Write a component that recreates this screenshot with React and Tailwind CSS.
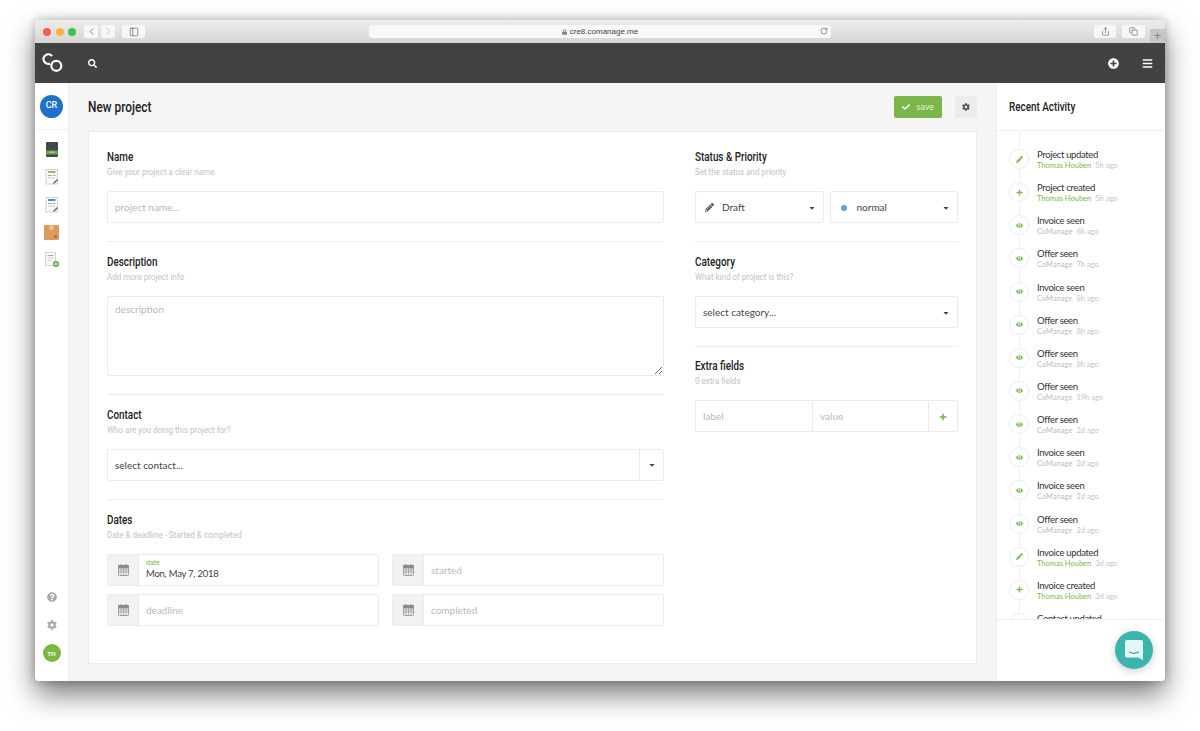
import React from "react";
import { FaSearch, FaPlusCircle, FaBars, FaCog, FaCheck, FaPencilAlt, FaCaretDown, FaPlus, FaEye, FaQuestionCircle, FaLock } from "react-icons/fa";
import { LuChevronLeft, LuChevronRight, LuRotateCw, LuShare, LuCopy, LuPanelLeft } from "react-icons/lu";

const roboto = "font-['Roboto','Liberation_Sans',sans-serif]";
const lato = "font-['Lato','Liberation_Sans',sans-serif]";

function Heading({ children, className = "" }) {
  return <div className={`${roboto} font-medium origin-left scale-x-[0.79] whitespace-nowrap ${className}`}>{children}</div>;
}

function Section({ title, sub, children, last, tight }) {
  const spacing = last ? "" : tight ? "border-b border-[#eeeeee] pb-[18px] mb-[12px]" : "border-b border-[#eeeeee] pb-[18px] mb-[13px]";
  return (
    <div className={spacing}>
      <Heading className="h-[14px] leading-[14px] text-[12.5px] text-[#222]">{title}</Heading>
      <div className={`${roboto} h-[14px] leading-[14px] mt-[1px] mb-[12px] text-[9px] text-[#c2c2c2] origin-left scale-x-[0.89] whitespace-nowrap`}>{sub}</div>
      {children}
    </div>
  );
}

const inputCls = "w-full bg-transparent outline-none text-[10px] text-[#444] placeholder:text-[#b9b9b9] font-['Lato',sans-serif]";

function TextField({ placeholder }) {
  return (
    <div className="h-[32px] border border-[#ebebeb] rounded-[2px] px-[7px] pt-[1px] flex items-center bg-white">
      <input className={inputCls} placeholder={placeholder} />
    </div>
  );
}

function Select({ children, className = "" }) {
  return (
    <div className={`h-[32px] border border-[#ebebeb] rounded-[2px] pl-[7px] pr-[7px] pt-[1px] flex items-center justify-between bg-white text-[10px] text-[#444] ${lato} ${className}`}>
      <div className="flex items-center">{children}</div>
      <FaCaretDown className="text-[#444] w-[8px] h-[8px]" />
    </div>
  );
}

function CalendarIcon() {
  return (
    <svg width="11" height="12" viewBox="0 0 11 12" fill="none" stroke="#8c8c8c" strokeWidth="0.8">
      <rect x="0.5" y="1.5" width="10" height="10" rx="0.8" />
      <rect x="0.5" y="1.5" width="10" height="2.5" fill="#8c8c8c" />
      <path d="M3 0 V3 M8 0 V3" strokeWidth="1.2" />
      <path d="M0.5 6 H10.5 M0.5 8 H10.5 M3 4 V11.5 M5.5 4 V11.5 M8 4 V11.5" strokeWidth="0.6" />
    </svg>
  );
}

function DateField({ placeholder, value }) {
  return (
    <div className="h-[32px] flex border border-[#ebebeb] rounded-[2px] bg-white">
      <div className="w-[31px] bg-[#f2f2f2] flex items-center justify-center border-r border-[#ebebeb]">
        <CalendarIcon />
      </div>
      <div className="flex-1 pl-[7px] flex flex-col justify-center">
        {value ? (
          <>
            <div className={`${roboto} text-[7px] leading-[8px] text-[#7cb84a] -mt-[1px]`}>date</div>
            <div className={`${lato} text-[9.5px] leading-[13px] text-[#444] tracking-[-0.25px]`}>{value}</div>
          </>
        ) : (
          <input className={inputCls} placeholder={placeholder} />
        )}
      </div>
    </div>
  );
}

function Doc({ bar }) {
  return (
    <svg width="14" height="16" viewBox="0 0 14 16" className="block">
      <rect x="1" y="0.5" width="11.5" height="14.5" fill="#fbfbf6" stroke="#c9c9c9" strokeWidth="0.8" />
      <rect x="3" y="2" width="7.5" height="2" fill={bar} />
      <rect x="3" y="6" width="4" height="1" fill="#aaa" />
      <rect x="8" y="6" width="2.5" height="1" fill="#aaa" />
      <rect x="3" y="8.5" width="7" height="1" fill="#ccc" />
      <path d="M8 14 L12 10 L13 11 L9 15 Z" fill="#666" />
    </svg>
  );
}

const SideIcons = [
  <svg key="a" width="12" height="15" viewBox="0 0 12 15" className="block">
    <rect width="12" height="15" rx="1" fill="#3f4a4c" />
    <rect y="8.5" width="12" height="4" fill="#6da13f" />
    <rect x="3" y="9.5" width="6" height="1.5" fill="#a8cf75" />
  </svg>,
  <Doc key="b" bar="#8cc069" />,
  <Doc key="c" bar="#4a90c8" />,
  <svg key="d" width="15" height="15" viewBox="0 0 15 15" className="block">
    <rect width="15" height="15" rx="1" fill="#dc9c5c" />
    <rect x="5.5" width="4" height="5" fill="#eec08e" />
    <rect x="10" y="10" width="3" height="3" fill="#b9753a" />
  </svg>,
  <svg key="e" width="14" height="15" viewBox="0 0 14 15" className="block">
    <rect x="0.5" y="0.5" width="10" height="13" fill="#fbfbf6" stroke="#c9c9c9" strokeWidth="0.8" />
    <rect x="2.5" y="3" width="6" height="1" fill="#aaa" />
    <rect x="2.5" y="5.5" width="6" height="1" fill="#ccc" />
    <rect x="2.5" y="8" width="4" height="1" fill="#ccc" />
    <circle cx="11" cy="12" r="3" fill="#62a84a" />
    <path d="M9.5 12 H12.5 M11 10.5 V13.5" stroke="#fff" strokeWidth="0.9" />
  </svg>,
];

const activity = [
  ["Project updated", "Thomas Houben", "5h ago", "edit"],
  ["Project created", "Thomas Houben", "5h ago", "add"],
  ["Invoice seen", "CoManage", "6h ago", "seen"],
  ["Offer seen", "CoManage", "7h ago", "seen"],
  ["Invoice seen", "CoManage", "8h ago", "seen"],
  ["Offer seen", "CoManage", "8h ago", "seen"],
  ["Offer seen", "CoManage", "8h ago", "seen"],
  ["Offer seen", "CoManage", "19h ago", "seen"],
  ["Offer seen", "CoManage", "2d ago", "seen"],
  ["Invoice seen", "CoManage", "2d ago", "seen"],
  ["Invoice seen", "CoManage", "2d ago", "seen"],
  ["Offer seen", "CoManage", "2d ago", "seen"],
  ["Invoice updated", "Thomas Houben", "3d ago", "edit"],
  ["Invoice created", "Thomas Houben", "3d ago", "add"],
  ["Contact updated", "Thomas Houben", "3d ago", "edit"],
];

function ActivityRow({ title, who, when, kind }) {
  const Icon = kind === "edit" ? FaPencilAlt : kind === "add" ? FaPlus : FaEye;
  return (
    <div className={`relative h-[33.15px] pl-[40px] ${lato}`}>
      <div className="absolute left-[12px] top-[7px] w-[20px] h-[20px] rounded-full bg-white border border-[#eeeeee] flex items-center justify-center">
        <Icon className="w-[7px] h-[7px] text-[#7cb84a]" />
      </div>
      <div className="text-[9.5px] leading-[12px] text-[#333] pt-[7px] h-[19px] box-content -mb-[7px] tracking-[-0.35px]">{title}</div>
      <div className="text-[7.5px] leading-[10px] whitespace-nowrap">
        <span className={who === "CoManage" ? "text-[#bdbdbd]" : "text-[#7cb84a]"}>{who}</span>
        <span className="text-[#c4c4c4] ml-[4px]">{when}</span>
      </div>
    </div>
  );
}

function ToolBtn({ className = "", children }) {
  return <div className={`h-[13px] bg-[#f7f7f7] rounded-[2px] flex items-center justify-center text-[#777] ${className}`}>{children}</div>;
}

export default function App() {
  return (
    <div className="w-[1200px] h-[731px] bg-white pt-[20px] px-[35px] overflow-hidden">
      <div className="relative h-[661px] rounded-[4px] flex flex-col bg-white shadow-[0_14px_28px_rgba(0,0,0,0.5),0_0_10px_rgba(0,0,0,0.25)]">
        <div className="h-[23px] shrink-0 rounded-t-[4px] bg-gradient-to-b from-[#ededed] to-[#d6d6d6] flex items-center pl-[8px] relative">
          <div className="flex gap-[4.5px]">
            <span className="w-[8px] h-[8px] rounded-full bg-[#f0605a]" />
            <span className="w-[8px] h-[8px] rounded-full bg-[#f6b53a]" />
            <span className="w-[8px] h-[8px] rounded-full bg-[#3fc04f]" />
          </div>
          <div className="flex gap-[3px] ml-[8px]">
            <ToolBtn className="w-[14px]"><LuChevronLeft className="w-[11px] h-[11px]" /></ToolBtn>
            <ToolBtn className="w-[14px] text-[#bbb]"><LuChevronRight className="w-[11px] h-[11px]" /></ToolBtn>
          </div>
          <ToolBtn className="w-[23px] ml-[7px]"><LuPanelLeft className="w-[10px] h-[10px]" /></ToolBtn>
          <div className="ml-[224px] w-[462px] h-[13px] bg-[#f8f8f8] rounded-[3px] flex items-center justify-center relative">
            <FaLock className="w-[5px] h-[6px] text-[#888] mr-[3px]" />
            <span className="font-['Liberation_Sans',sans-serif] text-[8px] text-[#444]">cre8.comanage.me</span>
            <LuRotateCw className="absolute right-[3px] top-[2px] w-[8px] h-[8px] text-[#666]" />
          </div>
          <ToolBtn className="w-[22px] ml-[263px]"><LuShare className="w-[9px] h-[9px]" /></ToolBtn>
          <ToolBtn className="w-[23px] ml-[6px]"><LuCopy className="w-[9px] h-[9px]" /></ToolBtn>
          <div className="absolute right-0 bottom-0 w-[15px] h-[14px] bg-[#c6c6c6] text-[#888] text-[13px] leading-[14px] text-center font-['Liberation_Sans',sans-serif]">+</div>
        </div>

        <div className="h-[40px] shrink-0 bg-[#424242] flex items-center text-white">
          <svg width="22" height="20" viewBox="0 0 22 20" className="ml-[6px]" fill="none" stroke="#fff" strokeWidth="2.2">
            <path d="M11 3 A4.8 4.8 0 1 0 9 10.6" />
            <circle cx="15.3" cy="12.8" r="5" />
          </svg>
          <FaSearch className="w-[9px] h-[9px] ml-[25px]" />
          <div className="flex-1" />
          <FaPlusCircle className="w-[11px] h-[11px]" />
          <FaBars className="w-[11px] h-[11px] ml-[23px] mr-[12px]" />
        </div>

        <div className="flex-1 flex min-h-0">
          <div className="w-[34px] shrink-0 bg-white border-r border-[#eeeeee] flex flex-col items-center rounded-bl-[4px]">
            <div className="h-[47px] w-full border-b border-[#f0f0f0] flex items-center justify-center shrink-0">
              <div className={`w-[23px] h-[23px] rounded-full bg-[#1c72c8] text-white text-[9px] font-medium flex items-center justify-center ${roboto}`}>CR</div>
            </div>
            <div className="flex flex-col items-center mt-[6px]">
              {SideIcons.map((ic, i) => (
                <div key={i} className="h-[27.5px] flex items-center justify-center">{ic}</div>
              ))}
            </div>
            <div className="flex-1" />
            <FaQuestionCircle className="w-[10px] h-[10px] text-[#a9a9a9]" />
            <FaCog className="w-[10px] h-[10px] text-[#a9a9a9] mt-[18px]" />
            <div className={`w-[18px] h-[18px] rounded-full bg-[#7cb83f] text-white text-[6px] font-bold flex items-center justify-center mt-[14px] mb-[19px] ${roboto}`}>TH</div>
          </div>

          <div className="flex-1 bg-[#f5f5f5] pl-[19px] pr-[19px] min-w-0">
            <div className="h-[48px] flex items-center">
              <Heading className="text-[15px] text-[#222]">New project</Heading>
              <div className="flex-1" />
              <div className={`w-[48px] h-[22px] rounded-[2px] bg-[#7ab648] text-white flex items-center justify-center gap-[6px] ${roboto} text-[8.5px]`}>
                <FaCheck className="w-[8px] h-[8px]" />
                <span className="text-[#e3f0d6]">save</span>
              </div>
              <div className="w-[22px] h-[22px] rounded-[2px] bg-[#ececec] ml-[13px] flex items-center justify-center">
                <FaCog className="w-[8px] h-[8px] text-[#555]" />
              </div>
            </div>
            <div className="h-[533px] bg-white border border-[#ececec] pt-[18px] pl-[18px] pr-[18px] flex gap-[31px]">
              <div className="w-[557px] shrink-0">
                <Section title="Name" sub="Give your project a clear name">
                  <TextField placeholder="project name..." />
                </Section>
                <Section title="Description" sub="Add more project info">
                  <textarea className={`${inputCls} block h-[80px] border border-[#ebebeb] rounded-[2px] px-[7px] py-[5px]`} placeholder="description" />
                </Section>
                <Section title="Contact" sub="Who are you doing this project for?">
                  <div className="h-[32px] flex border border-[#ebebeb] rounded-[2px]">
                    <div className={`flex-1 pl-[7px] flex items-center text-[10px] text-[#444] ${lato}`}>select contact...</div>
                    <div className="w-[24px] border-l border-[#ebebeb] flex items-center justify-center">
                      <FaCaretDown className="w-[8px] h-[8px] text-[#444]" />
                    </div>
                  </div>
                </Section>
                <Section last title="Dates" sub="Date & deadline - Started & completed">
                  <div className="grid grid-cols-2 gap-x-[13px] gap-y-[8px]">
                    <DateField value="Mon, May 7, 2018" />
                    <DateField placeholder="started" />
                    <DateField placeholder="deadline" />
                    <DateField placeholder="completed" />
                  </div>
                </Section>
              </div>
              <div className="w-[263px] shrink-0">
                <Section title="Status & Priority" sub="Set the status and priority">
                  <div className="flex gap-[6px]">
                    <Select className="flex-1">
                      <FaPencilAlt className="w-[9px] h-[9px] text-[#555] ml-[2px] mr-[8px]" />
                      Draft
                    </Select>
                    <Select className="flex-1">
                      <span className="w-[6px] h-[6px] rounded-full bg-[#5fa8d3] ml-[3px] mr-[10px]" />
                      normal
                    </Select>
                  </div>
                </Section>
                <Section tight title="Category" sub="What kind of project is this?">
                  <Select>select category...</Select>
                </Section>
                <Section last title="Extra fields" sub="0 extra fields">
                  <div className="h-[32px] flex border border-[#ebebeb] rounded-[2px] pt-[1px]">
                    <div className="w-[117px] pl-[7px] flex items-center border-r border-[#ebebeb]"><input className={inputCls} placeholder="label" /></div>
                    <div className="flex-1 pl-[7px] flex items-center border-r border-[#ebebeb] min-w-0"><input className={inputCls} placeholder="value" /></div>
                    <div className="w-[28px] flex items-center justify-center"><FaPlus className="w-[8px] h-[8px] text-[#6fb543]" /></div>
                  </div>
                </Section>
              </div>
            </div>
          </div>

          <div className="w-[169px] shrink-0 bg-white border-l border-[#ececec] flex flex-col rounded-br-[4px]">
            <div className="h-[48px] shrink-0 border-b border-[#efefef] flex items-center pl-[12px] pt-[2px]">
              <Heading className="text-[12.5px] text-[#222]">Recent Activity</Heading>
            </div>
            <div className="relative h-[488px] overflow-hidden pt-[11px] shrink-0">
              <div className="absolute left-[22px] top-0 bottom-0 w-[1px] bg-[#eeeeee]" />
              {activity.map((a, i) => (
                <ActivityRow key={i} title={a[0]} who={a[1]} when={a[2]} kind={a[3]} />
              ))}
            </div>
            <div className="flex-1 border-t border-[#efefef]" />
          </div>
        </div>

        <div className="absolute right-[12px] bottom-[12px] w-[38px] h-[38px] rounded-full bg-[#3cb4ae] shadow-[0_2px_8px_rgba(0,0,0,0.2)] flex items-center justify-center">
          <svg width="18" height="20" viewBox="0 0 18 20">
            <path d="M2 0 H16 A2 2 0 0 1 18 2 V20 L13 17.5 H2 A2 2 0 0 1 0 15.5 V2 A2 2 0 0 1 2 0 Z" fill="#e6f6f5" />
            <path d="M4 12 Q9 15 14 12" stroke="#3a8e8a" strokeWidth="1" fill="none" />
          </svg>
        </div>
      </div>
    </div>
  );
}
